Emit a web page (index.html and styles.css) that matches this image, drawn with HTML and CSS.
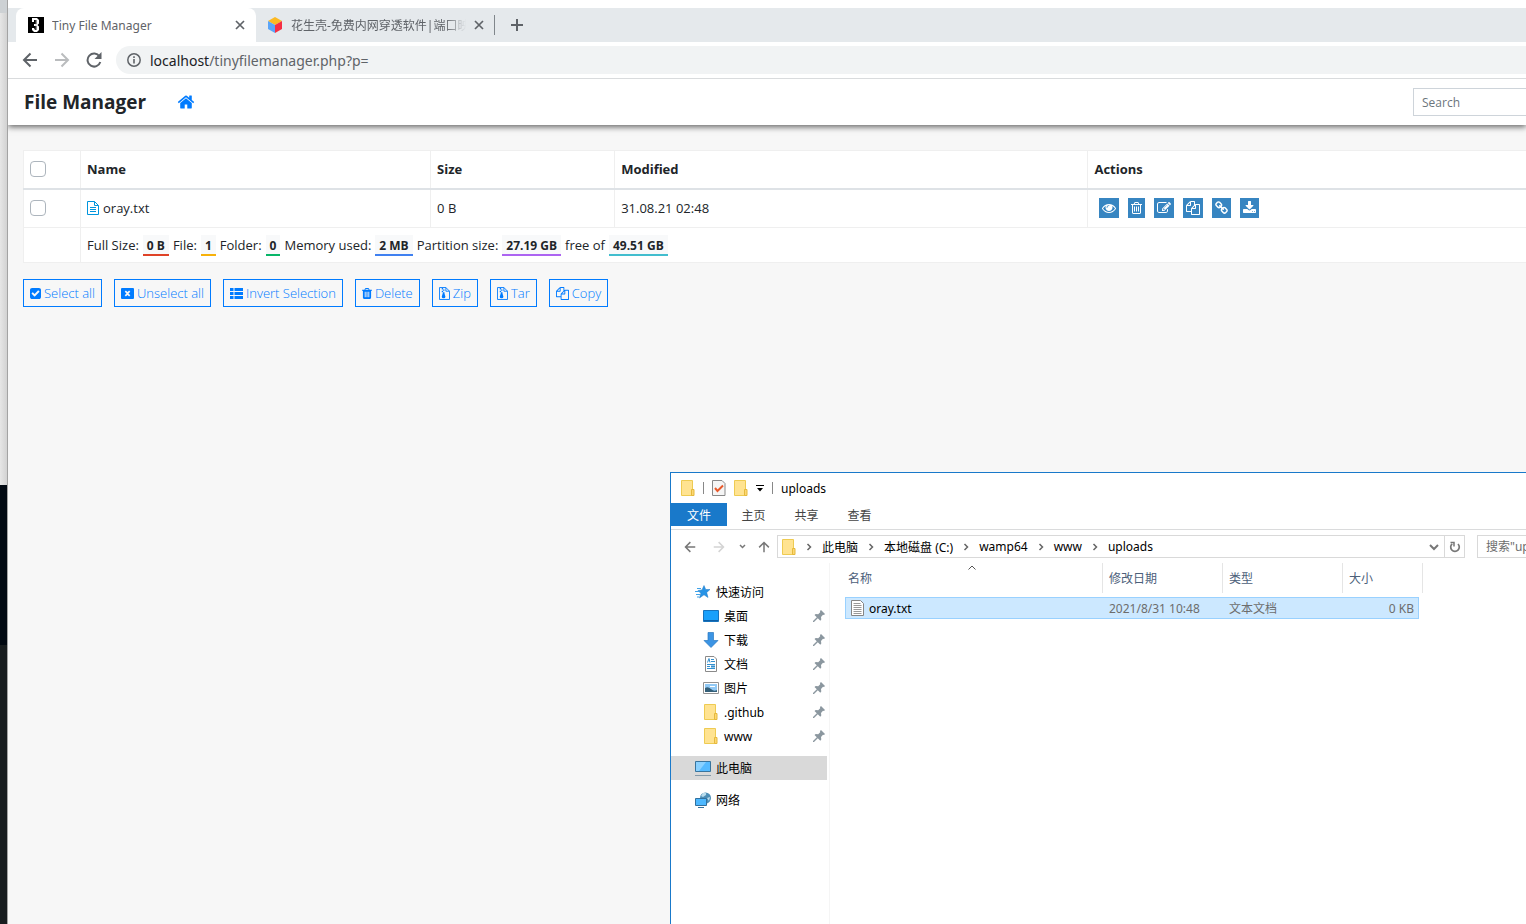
FILE: index.html
```html
<!DOCTYPE html>
<html lang="en">
<head>
<meta charset="utf-8">
<title>Tiny File Manager</title>
<link rel="stylesheet" href="styles.css">
</head>
<body>
<svg class="defs" aria-hidden="true">
  <symbol id="home" viewBox="0 0 1792 1792"><path d="M1472 992v480q0 26-19 45t-45 19h-384v-384h-256v384h-384q-26 0-45-19t-19-45v-480q0-1 .5-3t.5-3l575-474 575 474q1 2 1 6zm223-69l-62 74q-8 9-21 11h-3q-13 0-21-7l-692-577-692 577q-12 8-24 7-13-2-21-11l-62-74q-8-10-7-23.5t11-21.5l719-599q32-26 76-26t76 26l244 204v-195q0-14 9-23t23-9h192q14 0 23 9t9 23v408l219 182q10 8 11 21.5t-7 23.5z"/></symbol>
  <symbol id="eye" viewBox="0 0 1792 1792"><path d="M1664 960q-152-236-381-353 61 104 61 225 0 185-131.5 316.5t-316.5 131.5-316.5-131.5-131.5-316.5q0-121 61-225-229 117-381 353 133 205 333.5 326.5t434.5 121.5 434.5-121.5 333.5-326.5zm-720-384q0-20-14-34t-34-14q-125 0-214.5 89.5t-89.5 214.5q0 20 14 34t34 14 34-14 14-34q0-86 61-147t147-61q20 0 34-14t14-34zm848 384q0 34-20 69-140 230-376.5 368.5t-499.5 138.5-499.5-139-376.5-368q-20-35-20-69t20-69q140-229 376.5-368t499.5-139 499.5 139 376.5 368q20 35 20 69z"/></symbol>
  <symbol id="trash-o" viewBox="192 0 1408 1792"><path d="M704 736v576q0 14-9 23t-23 9h-64q-14 0-23-9t-9-23v-576q0-14 9-23t23-9h64q14 0 23 9t9 23zm256 0v576q0 14-9 23t-23 9h-64q-14 0-23-9t-9-23v-576q0-14 9-23t23-9h64q14 0 23 9t9 23zm256 0v576q0 14-9 23t-23 9h-64q-14 0-23-9t-9-23v-576q0-14 9-23t23-9h64q14 0 23 9t9 23zm128 724v-948h-896v948q0 22 7 40.5t14.5 27 10.5 8.5h832q3 0 10.5-8.5t14.5-27 7-40.5zm-672-1076h448l-48-117q-7-9-17-11h-317q-10 2-17 11zm928 32v64q0 14-9 23t-23 9h-96v948q0 83-47 143.5t-113 60.5h-832q-66 0-113-58.5t-47-141.5v-952h-96q-14 0-23-9t-9-23v-64q0-14 9-23t23-9h309l70-167q15-37 54-63t79-26h320q40 0 79 26t54 63l70 167h309q14 0 23 9t9 23z"/></symbol>
  <symbol id="trash" viewBox="192 0 1408 1792"><path d="M704 1376v-704q0-14-9-23t-23-9h-64q-14 0-23 9t-9 23v704q0 14 9 23t23 9h64q14 0 23-9t9-23zm256 0v-704q0-14-9-23t-23-9h-64q-14 0-23 9t-9 23v704q0 14 9 23t23 9h64q14 0 23-9t9-23zm256 0v-704q0-14-9-23t-23-9h-64q-14 0-23 9t-9 23v704q0 14 9 23t23 9h64q14 0 23-9t9-23zm-544-992h448l-48-117q-7-9-17-11h-317q-10 2-17 11zm928 32v64q0 14-9 23t-23 9h-96v948q0 83-47 143.5t-113 60.5h-832q-66 0-113-58.5t-47-141.5v-952h-96q-14 0-23-9t-9-23v-64q0-14 9-23t23-9h309l70-167q15-37 54-63t79-26h320q40 0 79 26t54 63l70 167h309q14 0 23 9t9 23z"/></symbol>
  <symbol id="edit" viewBox="0 0 1792 1792"><path d="M888 1184l116-116-152-152-116 116v56h96v96h56zm440-720q-16-16-33 1l-350 350q-17 17-1 33t33-1l350-350q17-17 1-33zm80 594v190q0 119-84.5 203.5t-203.5 84.5h-832q-119 0-203.5-84.5t-84.5-203.5v-832q0-119 84.5-203.5t203.5-84.5h832q63 0 117 25 15 7 18 23 3 17-9 29l-49 49q-14 14-32 8-23-6-45-6h-832q-66 0-113 47t-47 113v832q0 66 47 113t113 47h832q66 0 113-47t47-113v-126q0-13 9-22l64-64q15-15 35-7t20 29zm-96-738l288 288-672 672h-288v-288zm444 132l-92 92-288-288 92-92q28-28 68-28t68 28l152 152q28 28 28 68t-28 68z"/></symbol>
  <symbol id="files" viewBox="0 0 1792 1792"><path d="M1696 384q40 0 68 28t28 68v1216q0 40-28 68t-68 28h-960q-40 0-68-28t-28-68v-288h-544q-40 0-68-28t-28-68v-672q0-40 20-88t48-76l408-408q28-28 76-48t88-20h416q40 0 68 28t28 68v328q68-40 128-40h416zm-544 213l-299 299h299v-299zm-640-384l-299 299h299v-299zm196 647l316-316v-416h-384v416q0 40-28 68t-68 28h-416v640h512v-256q0-40 20-88t48-76zm956 804v-1152h-384v416q0 40-28 68t-68 28h-416v640h896z"/></symbol>
  <symbol id="link" viewBox="64 0 1664 1792"><path d="M1520 1216q0-40-28-68l-208-208q-28-28-68-28-42 0-72 32 3 3 19 18.500t21.500 21.500 15 19 13 25.500 3.500 27.500q0 40-28 68t-68 28q-15 0-27.500-3.500t-25.500-13-19-15-21.500-21.500-18.500-19q-33 31-33 73 0 40 28 68l206 207q27 27 68 27 40 0 68-26l147-146q28-28 28-67zm-703-705q0-40-28-68l-206-207q-28-28-68-28-39 0-68 27l-147 146q-28 28-28 67 0 40 28 68l208 208q27 27 68 27 42 0 72-31-3-3-19-18.500t-21.500-21.500-15-19-13-25.500-3.500-27.500q0-40 28-68t68-28q15 0 27.500 3.500t25.500 13 19 15 21.500 21.500 18.500 19q33-31 33-73zm895 705q0 120-85 203l-147 146q-83 83-203 83-121 0-204-85l-206-207q-83-83-83-203 0-123 88-209l-88-88q-86 88-208 88-120 0-204-84l-208-208q-84-84-84-204t85-203l147-146q83-83 203-83 121 0 204 85l206 207q83 83 83 203 0 123-88 209l88 88q86-88 208-88 120 0 204 84l208 208q84 84 84 204z"/></symbol>
  <symbol id="download" viewBox="64 0 1664 1792"><path d="M1344 1344q0-26-19-45t-45-19-45 19-19 45 19 45 45 19 45-19 19-45zm256 0q0-26-19-45t-45-19-45 19-19 45 19 45 45 19 45-19 19-45zm128-224v320q0 40-28 68t-68 28h-1472q-40 0-68-28t-28-68v-320q0-40 28-68t68-28h465l135 136q58 56 136 56t136-56l136-136h464q40 0 68 28t28 68zm-325-569q17 41-14 70l-448 448q-18 19-45 19t-45-19l-448-448q-31-29-14-70 17-39 59-39h256v-448q0-26 19-45t45-19h256q26 0 45 19t19 45v448h256q42 0 59 39z"/></symbol>
  <symbol id="check" viewBox="128 0 1536 1792"><path d="M813 1299l614-614q19-19 19-45t-19-45l-102-102q-19-19-45-19t-45 19l-467 467-211-211q-19-19-45-19t-45 19l-102 102q-19 19-19 45t19 45l358 358q19 19 45 19t45-19zm851-883v960q0 119-84.500 203.500t-203.500 84.500h-960q-119 0-203.500-84.500t-84.500-203.500v-960q0-119 84.500-203.500t203.500-84.500h960q119 0 203.500 84.500t84.500 203.500z"/></symbol>
  <symbol id="close-box" viewBox="0 0 13 13"><path fill-rule="evenodd" d="M1 1h11q1 0 1 1v9q0 1-1 1H1q-1 0-1-1V2q0-1 1-1zm2.700 3.700L5.500 6.500 3.700 8.300l1.200 1.200 1.600-1.600 1.600 1.600 1.200-1.200L7.500 6.500l1.800-1.800-1.200-1.200-1.600 1.600-1.600-1.600z"/></symbol>
  <symbol id="list" viewBox="0 0 13 13"><path d="M0 1h3.500v3H0zM4.500 1H13v3H4.500zM0 5h3.500v3H0zM4.500 5H13v3H4.500zM0 9h3.500v3H0zM4.500 9H13v3H4.500z"/></symbol>
  <symbol id="archive" viewBox="0 0 12 14"><path fill="none" stroke="currentColor" d="M1 .5h6.500l4 4v9H.5V.5zM7.500.5v4h4"/><path d="M3 1h1.500v1.500H3zM4.500 2.500H6V4H4.500zM3 4h1.500v1.500H3zM4.500 5.500H6V7l1 3.500q0 1.700-2 1.700t-2-1.700L4 7z"/></symbol>
  <symbol id="text-file" viewBox="0 0 12 14"><path fill="none" stroke="currentColor" d="M.5.500H7.500l4 4v9H.5zM7.500.5v4h4M3 6.500h6M3 8.500h6M3 10.500h6"/></symbol>
  <symbol id="x" viewBox="0 0 10 10"><path fill="none" stroke="currentColor" stroke-width="1.700" d="M1 1l8 8M9 1l-8 8"/></symbol>
  <symbol id="back" viewBox="0 0 16 16"><path fill="none" stroke="currentColor" stroke-width="2" d="M15 8H2.500M8.500 1.500L2 8l6.500 6.500"/></symbol>
  <symbol id="folder" viewBox="0 0 14 16"><path fill="#ffe391" stroke="#eecb52" d="M.5.500h11v15H.5z"/><path fill="#fcd873" stroke="#e6b93d" d="M10.500 9.500h2.500v6h-2.500z"/></symbol>
  <symbol id="chev" viewBox="0 0 6 8"><path fill="none" stroke="#666" stroke-width="1.500" d="M1.500 1l3 3-3 3"/></symbol>
  <symbol id="pin" viewBox="0 0 12 12"><path fill="#8b979f" d="M7 1l1-1 4 4-1 1-1-.2-2 2.200.3 2.500-1 1.200-2.500-2.500L1 12H0v-1l3.800-3.800L1.500 4.900l1.200-1 2.500.3L7.200 2.200z"/></symbol>
</svg>

<div class="desktop" aria-hidden="true"><div class="behind-tabs"></div><div class="behind-page"></div><div class="wall"></div></div>

<div class="browser">
  <div class="tabs">
    <div class="tab active">
      <svg class="i16" viewBox="0 0 16 16"><path fill="#000" d="M0 0h16v16H0z"/><path fill="#fff" d="M4 1h5l2 2v3.500L9.500 8 11 9.500V13l-2 2H6l-2-2v-2h2l1 2h1.500V9H6V7h2.500V3H6v2H4z"/><path stroke="#aaa" stroke-width=".6" d="M8 3v10"/></svg>
      <span class="tab-title">Tiny File Manager</span>
      <button class="plain" aria-label="Close tab"><svg class="i10"><use href="#x"/></svg></button>
    </div>
    <div class="tab second">
      <svg class="i16" viewBox="0 0 16 16"><path fill="#fcb922" d="M8 0l7 4-7 4-7-4z"/><path fill="#5ba5f8" d="M1 4l7 4v8l-7-4z"/><path fill="#f52f43" d="M15 4L8 8v8l7-4z"/></svg>
      <span class="tab-title fade">花生壳-免费内网穿透软件|端口映</span>
      <button class="plain" aria-label="Close tab"><svg class="i10"><use href="#x"/></svg></button>
    </div>
    <button class="plain new-tab" aria-label="New tab"><svg class="i12" viewBox="0 0 12 12"><path stroke="currentColor" stroke-width="2" d="M6 0v12M0 6h12"/></svg></button>
  </div>
  <div class="toolbar">
    <button class="plain" aria-label="Back"><svg class="i16"><use href="#back"/></svg></button>
    <button class="plain dim" aria-label="Forward"><svg class="i16 flip"><use href="#back"/></svg></button>
    <button class="plain" aria-label="Reload"><svg class="i16" viewBox="0 0 16 16"><path fill="none" stroke="currentColor" stroke-width="2" d="M13.500 4.500A6.500 6.500 0 1 0 14.300 10"/><path fill="currentColor" d="M15.500 0v7h-7z"/></svg></button>
    <div class="omnibox">
      <svg class="i14" viewBox="0 0 14 14"><circle cx="7" cy="7" r="6.200" fill="none" stroke="currentColor" stroke-width="1.500"/><path stroke="currentColor" stroke-width="1.600" d="M7 6v4.500M7 3.300v1.600"/></svg>
      <span class="url"><b>localhost</b>/tinyfilemanager.php?p=</span>
    </div>
  </div>
  <nav class="navbar">
    <a class="brand" href="#">File Manager</a>
    <a class="home" href="#" aria-label="Home"><svg class="i18"><use href="#home"/></svg></a>
    <input class="search" type="text" placeholder="Search" aria-label="Search">
  </nav>
  <main class="page">
    <table class="files">
      <colgroup><col class="c-check"><col class="c-name"><col class="c-size"><col class="c-mod"><col></colgroup>
      <thead><tr><th><input type="checkbox" aria-label="Select all files"></th><th>Name</th><th>Size</th><th>Modified</th><th>Actions</th></tr></thead>
      <tbody><tr>
        <td><input type="checkbox" aria-label="Select oray.txt"></td>
        <td><a class="file" href="#"><svg class="doc"><use href="#text-file"/></svg>oray.txt</a></td>
        <td>0 B</td><td>31.08.21 02:48</td>
        <td><div class="actions">
          <a href="#" aria-label="Preview"><svg class="i14"><use href="#eye"/></svg></a>
          <a href="#" aria-label="Delete"><svg class="n11"><use href="#trash-o"/></svg></a>
          <a href="#" aria-label="Rename"><svg class="i14"><use href="#edit"/></svg></a>
          <a href="#" aria-label="Copy to"><svg class="i14"><use href="#files"/></svg></a>
          <a href="#" aria-label="Direct link"><svg class="n13"><use href="#link"/></svg></a>
          <a href="#" aria-label="Download"><svg class="n13"><use href="#download"/></svg></a>
        </div></td>
      </tr></tbody>
      <tfoot><tr><td></td><td colspan="4"><div class="totals">
        <span>Full Size:</span><b class="red">0 B</b><span>File:</span><b class="amber">1</b><span>Folder:</span><b class="green">0</b><span>Memory used:</span><b class="blue">2 MB</b><span>Partition size:</span><b class="purple">27.19 GB</b><span>free of</span><b class="teal">49.51 GB</b>
      </div></td></tr></tfoot>
    </table>
    <div class="buttons">
      <button><svg class="b11"><use href="#check"/></svg>Select all</button>
      <button><svg class="b13"><use href="#close-box"/></svg>Unselect all</button>
      <button><svg class="b13"><use href="#list"/></svg>Invert Selection</button>
      <button><svg class="b10"><use href="#trash"/></svg>Delete</button>
      <button><svg class="b11"><use href="#archive"/></svg>Zip</button>
      <button><svg class="b11"><use href="#archive"/></svg>Tar</button>
      <button><svg class="b13"><use href="#files"/></svg>Copy</button>
    </div>
  </main>
</div>

<section class="explorer" lang="zh-CN" aria-label="uploads">
  <header class="titlebar">
    <svg class="folder"><use href="#folder"/></svg><i class="sep"></i>
    <svg class="props" viewBox="0 0 14 16"><path fill="#f5f5f5" stroke="#888" d="M.5.500h9.500l3 3v12H.5z"/><path fill="none" stroke="#e8592b" stroke-width="2" d="M3 8l2.500 3L11 5.500"/></svg>
    <svg class="folder"><use href="#folder"/></svg>
    <svg class="drop" viewBox="0 0 8 7"><path d="M0 0h8v1H0zM1 3h6L4 6.500z"/></svg><i class="sep"></i>
    <span>uploads</span>
  </header>
  <div class="ribbon"><button class="on">文件</button><button>主页</button><button>共享</button><button>查看</button></div>
  <div class="addressbar">
    <button class="plain gray" aria-label="Back"><svg class="i12"><use href="#back"/></svg></button>
    <button class="plain pale" aria-label="Forward"><svg class="i12 flip"><use href="#back"/></svg></button>
    <button class="plain gray" aria-label="Recent"><svg class="caret" viewBox="0 0 7 5"><path fill="none" stroke="currentColor" stroke-width="1.500" d="M1 1l2.500 2.500L6 1"/></svg></button>
    <button class="plain gray" aria-label="Up"><svg class="i12 up"><use href="#back"/></svg></button>
    <div class="crumbs">
      <svg class="folder"><use href="#folder"/></svg><svg class="chev"><use href="#chev"/></svg><a href="#">此电脑</a><svg class="chev"><use href="#chev"/></svg><a href="#">本地磁盘 (C:)</a><svg class="chev"><use href="#chev"/></svg><a href="#">wamp64</a><svg class="chev"><use href="#chev"/></svg><a href="#">www</a><svg class="chev"><use href="#chev"/></svg><a href="#">uploads</a>
      <button class="plain gray history" aria-label="History"><svg class="i10" viewBox="0 0 10 10"><path fill="none" stroke="currentColor" stroke-width="2" d="M1 3l4 4 4-4"/></svg></button>
      <button class="plain gray refresh" aria-label="Refresh"><svg class="i12" viewBox="0 0 12 12"><path fill="none" stroke="currentColor" stroke-width="1.700" d="M3.200 2.800A4.300 4.300 0 1 0 9 3"/><path fill="none" stroke="currentColor" stroke-width="1.500" d="M1.500 1.500h3.500v4"/></svg></button>
    </div>
    <input class="find" type="text" placeholder="搜索&quot;uploads&quot;" aria-label="搜索">
  </div>
  <div class="panes">
    <nav class="tree">
      <a class="root" href="#"><svg class="i16" viewBox="0 0 16 16"><path fill="#2693e6" stroke="#1c77c4" stroke-width=".5" d="M9 1.500l1.700 4h4.300l-3.300 3 1.300 5L9 10.800 4.500 14l1.300-4.700L3 6.500l4-.6z"/><path stroke="#3fa2e8" d="M2 4.500h4M0 7.500h4M1 10.500h4M2 13h2"/></svg>快速访问</a>
      <a href="#"><svg class="i16" viewBox="0 0 16 16"><path fill="#18a0fb" stroke="#1673bd" d="M.5 2.500h15v11H.5z"/><path fill="#0d5ea6" d="M1 12h14v1H1z"/></svg>桌面<svg class="pin"><use href="#pin"/></svg></a>
      <a href="#"><svg class="i16" viewBox="0 0 16 16"><path fill="#3b94e4" stroke="#2a78c2" stroke-width=".7" d="M5 .5h5.500v8H15L8 15.500 1 8.500h4z"/></svg>下载<svg class="pin"><use href="#pin"/></svg></a>
      <a href="#"><svg class="i16" viewBox="0 0 16 16"><path fill="#fff" stroke="#8a8a8a" d="M2.500.500H11L13.500 3v12.500h-11z"/><path fill="none" stroke="#3490cf" d="M4.500 6.500L6 2.500l1 4M8 3.500h3M8 5.500h4M4 8.500h8M4 10.500h3M4 12.500h8"/><path fill="#3490cf" d="M8 9.500h4v2H8z"/></svg>文档<svg class="pin"><use href="#pin"/></svg></a>
      <a href="#"><svg class="i16" viewBox="0 0 16 16"><path fill="#fff" stroke="#929292" d="M.5 2.500h15v11H.5z"/><path fill="#91c9f5" d="M2 4h12v8H2z"/><path fill="#345f78" d="M2 8q3-2 6 1t6 1v2H2z"/><path fill="#fff" d="M7 6h5v1H7z"/></svg>图片<svg class="pin"><use href="#pin"/></svg></a>
      <a href="#"><svg class="i16"><use href="#folder"/></svg>.github<svg class="pin"><use href="#pin"/></svg></a>
      <a href="#"><svg class="i16"><use href="#folder"/></svg>www<svg class="pin"><use href="#pin"/></svg></a>
      <a class="root gap sel" href="#"><svg class="i16" viewBox="0 0 16 16"><path fill="#55baff" stroke="#39749d" d="M.5 1.500h15v10H.5z"/><path fill="#8ad1ff" d="M1 2h10L4 11H1z"/><path stroke="#8499a8" d="M0 15.500h16"/></svg>此电脑</a>
      <a class="root gap" href="#"><svg class="i16" viewBox="0 0 16 16"><circle cx="10.500" cy="6" r="5.500" fill="#4c8db5"/><path fill="#b9dced" d="M8 1q4-1 3 2L8 5 6 4zM12 6l3-1-1 4z"/><path fill="#4db8ff" stroke="#32709d" d="M.5 6.500h11v7H.5z"/><path stroke="#32709d" d="M3 15.500h6"/></svg>网络</a>
    </nav>
    <div class="listing">
      <svg class="sort" viewBox="0 0 8 5"><path fill="none" stroke="#555" d="M.5 4.500L4 1l3.500 3.500"/></svg>
      <table>
        <colgroup><col class="l-name"><col class="l-col"><col class="l-col"><col class="l-size"><col class="l-end"></colgroup>
        <thead><tr><th>名称</th><th>修改日期</th><th>类型</th><th colspan="2">大小</th></tr></thead>
        <tbody><tr><td><span class="entry"><svg class="txt" viewBox="0 0 13 16"><path fill="#fff" stroke="#858585" d="M.5.500h9l3 3v12H.5z"/><path stroke="#999" d="M2.500 3.500h7M2.500 5.500h8M2.500 7.500h8M2.500 9.500h8M2.500 11.500h8M2.500 13.500h8"/></svg>oray.txt</span></td><td>2021/8/31 10:48</td><td>文本文档</td><td>0 KB</td></tr></tbody>
      </table>
    </div>
  </div>
</section>
</body>
</html>
```
FILE: styles.css
```css
* { box-sizing: border-box; }
html, body { height: 100%; }
body {
  margin: 0;
  display: flex;
  position: relative;
  overflow: hidden;
  background: #f7f7f7;
  color: #212529;
  font-family: "Open Sans", "Noto Sans CJK SC", sans-serif;
  font-size: 13px;
}
svg { display: block; flex: none; fill: currentColor; }
a { color: inherit; text-decoration: none; }
button, input { font: inherit; color: inherit; }
.defs { position: absolute; width: 0; height: 0; }
.plain { border: 0; padding: 0; background: none; display: flex; align-items: center; justify-content: center; }
.i10 { width: 10px; height: 10px; }
.i12 { width: 12px; height: 12px; }
.i14 { width: 14px; height: 14px; }
.i16 { width: 16px; height: 16px; }
.i18 { width: 18px; height: 18px; }
.n11 { width: 11px; height: 14px; }
.n13 { width: 13px; height: 14px; }
.b10 { width: 10px; height: 13px; }
.b11 { width: 11px; height: 13px; }
.b13 { width: 13px; height: 13px; }
.flip { transform: scaleX(-1); }
.up { transform: rotate(90deg); }

/* Desktop edge visible left of the browser */
.desktop { flex: none; width: 8px; display: flex; flex-direction: column; background: #181d1f; border-right: 1px solid #a3a3a3; }
.behind-tabs { height: 13px; background: #cdd1d4; }
.behind-page { height: 472px; background: linear-gradient(90deg, #e6e6e6, #d2d2d2); }
.wall { height: 160px; background: #010912; }

/* Browser chrome */
.browser { flex: 1; min-width: 0; display: flex; flex-direction: column; }
.tabs { display: flex; height: 42px; padding-left: 8px; border-top: 8px solid #fff; background: #e5e9ec; color: #5f6368; font-family: "Noto Sans", "Noto Sans CJK SC", sans-serif; font-size: 12px; }
.tab { display: flex; align-items: center; gap: 8px; padding: 0 11px 0 12px; }
.tab.active { width: 240px; border-radius: 8px 8px 0 0; background: #fff; }
.tab.second { width: 239px; padding: 0 11px; position: relative; }
.tab.second::after { content: ""; position: absolute; right: 0; top: 7px; width: 1px; height: 20px; background: #80868b; }
.tab-title { flex: 1; min-width: 0; overflow: hidden; white-space: nowrap; }
.fade { -webkit-mask-image: linear-gradient(90deg, #000 88%, transparent); mask-image: linear-gradient(90deg, #000 88%, transparent); }
.new-tab { width: 44px; }
.toolbar { display: flex; align-items: center; gap: 16px; height: 37px; padding-left: 14px; border-bottom: 1px solid #d9dbdd; background: #fff; color: #5f6368; }
.dim { color: #babcbe; }
.omnibox { flex: 1; display: flex; align-items: center; gap: 9px; height: 28px; margin-left: -2px; padding-left: 11px; border-radius: 14px 0 0 14px; background: #f1f3f4; font-family: "Noto Sans", sans-serif; font-size: 14px; }
.url b { font-weight: 400; color: #202124; }

/* File manager page */
.navbar { display: flex; align-items: center; height: 46px; padding: 0 0 0 16px; background: #fff; box-shadow: 0 2px 6px rgba(0,0,0,.6); clip-path: inset(0 0 -12px 0); }
.brand { font-size: 19px; font-weight: 700; color: #212529; }
.home { margin-left: 31px; color: #007bff; }
.search { width: 113px; height: 28px; margin-left: auto; padding: 0 8px; border: 1px solid #ced4da; border-right: 0; border-radius: 0; font-size: 12px; background: #fff; }
.search::placeholder { color: #6c757d; }
.page { padding: 25px 0 0 15px; }
.files { width: 100%; table-layout: fixed; border-collapse: collapse; background: #fff; }
.c-check { width: 57px; }
.c-name { width: 23.3%; }
.c-size { width: 12.25%; }
.c-mod { width: 31.5%; }
.files th, .files td { height: 38px; padding: 0 6px; border: 1px solid #efefef; border-right: 0; text-align: left; font-weight: 400; }
.files tbody td { height: 39px; }
.files th { border-bottom: 2px solid #dee2e6; font-weight: 700; }
.files tfoot td { height: 35px; }
.files input { appearance: none; display: block; width: 16px; height: 16px; margin: 0; border: 1px solid #adb5bd; border-radius: 4px; background: #fff; }
.file { display: flex; align-items: center; gap: 4px; }
.doc { width: 12px; height: 14px; color: #0095dd; fill: none; }
.actions { display: flex; gap: 9px; padding-left: 5px; }
.actions a { display: flex; align-items: center; height: 20px; padding: 0 3px; background: #3785c1; color: #fff; }
.totals { display: flex; align-items: center; gap: 4px; white-space: nowrap; }
.totals b { padding: 2px 4px 0; background: #f8f9fa; border-bottom: 2px solid; font-size: 12px; line-height: 17px; }
.totals b::first-line { color: #212529; }
.red { border-color: #df4227 !important; }
.amber { border-color: #f7b10a !important; }
.green { border-color: #07b568 !important; }
.blue { border-color: #3f80f0 !important; }
.purple { border-color: #ac64f1 !important; }
.teal { border-color: #42bdce !important; }
.buttons { display: flex; gap: 12px; margin-top: 16px; }
.buttons button { display: flex; align-items: center; gap: 3px; height: 28px; padding: 0 6px; border: 1px solid #007bff; background: none; color: #007bff; font-weight: 300; white-space: nowrap; }

/* Explorer window floating over the browser */
.explorer { position: absolute; left: 670px; top: 472px; right: 0; bottom: 0; display: flex; flex-direction: column; overflow: hidden; border: 1px solid #1979ca; border-width: 1px 0 0 1px; background: #fff; color: #000; font-family: "Noto Sans", "Noto Sans CJK SC", sans-serif; font-size: 12px; }
.titlebar { display: flex; align-items: center; gap: 8px; height: 30px; padding-left: 10px; }
.folder, .props { width: 14px; height: 16px; }
.drop { width: 8px; height: 7px; }
.sep { width: 1px; height: 12px; background: #888; }
.ribbon { display: flex; height: 27px; border-bottom: 1px solid #dadbdc; }
.ribbon button { width: 53px; height: 23px; padding: 0; border: 0; background: none; color: #444; }
.ribbon .on { width: 56px; background: #1979ca; color: #fff; }
.addressbar { display: flex; align-items: center; gap: 12px; height: 33px; padding-left: 13px; }
.addressbar .pale { padding: 0 2px 0 5px; }
.gray { color: #777; }
.pale { color: #d4d4d4; }
.caret { width: 7px; height: 5px; }
.crumbs { flex: 1; display: flex; align-items: center; gap: 10px; height: 23px; margin-left: -5px; padding-left: 4px; border: 1px solid #d9d9d9; }
.chev { width: 6px; height: 8px; }
.history { margin-left: auto; }
.refresh { align-self: stretch; width: 20px; margin-left: -5px; border-left: 1px solid #d9d9d9; }
.find { width: 49px; height: 23px; padding: 0 0 0 8px; border: 1px solid #d9d9d9; border-right: 0; }
.find::placeholder { color: #6d6d6d; }
.panes { flex: 1; display: flex; }
.tree { width: 159px; padding-top: 17px; border-right: 1px solid #f5f5f5; }
.tree a { display: flex; align-items: center; gap: 5px; height: 24px; margin-right: 2px; padding: 0 2px 0 32px; }
.tree .root { padding-left: 24px; }
.tree .gap { margin-top: 8px; }
.tree .sel { background: #d9d9d9; }
.pin { width: 12px; height: 12px; margin-left: auto; }
.listing { position: relative; padding-left: 15px; }
.sort { position: absolute; left: 138px; top: 2px; width: 8px; height: 5px; }
.listing table { table-layout: fixed; width: 578px; border-collapse: separate; border-spacing: 0; }
.l-name { width: 258px; }
.l-col { width: 120px; }
.l-size { width: 76px; }
.l-end { width: 4px; }
.listing th { height: 30px; padding: 0 3px 0 6px; border-right: 1px solid #e5e5e5; text-align: left; font-weight: 400; color: #4c607a; }
.listing th:first-child { padding-left: 3px; }
.listing thead::after { content: ""; display: block; height: 4px; }
.listing td { height: 22px; padding: 0 4px 0 6px; border: 1px solid #99d1ff; border-width: 1px 0; background: #cce8ff; color: #6d6d6d; }
.listing td:first-child { border-left-width: 1px; padding-left: 5px; color: #000; }
.listing td:last-child { border-right-width: 1px; text-align: right; }
.entry { display: flex; align-items: center; gap: 5px; }
.txt { width: 13px; height: 16px; }
```
